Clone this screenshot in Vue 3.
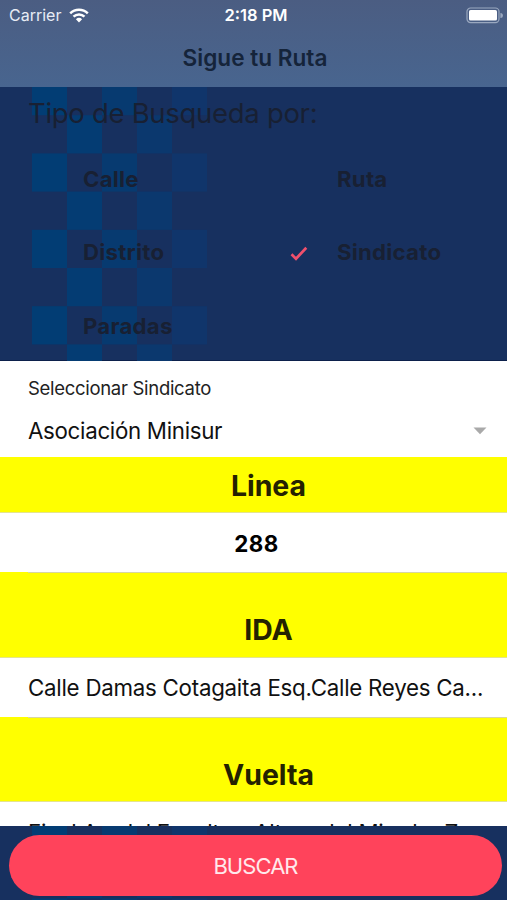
<script setup>
const options = [
  { label: 'Calle', selected: false },
  { label: 'Ruta', selected: false },
  { label: 'Distrito', selected: false },
  { label: 'Sindicato', selected: true },
  { label: 'Paradas', selected: false }
]

const columns = [
  { x: 32, fill: '#023d74', odd: false },
  { x: 67, fill: '#043c73', odd: true },
  { x: 102, fill: '#073a70', odd: false },
  { x: 137, fill: '#0b386e', odd: true },
  { x: 172, fill: '#10356b', odd: false }
]

function checker(top, rows) {
  const cells = []
  for (let row = 0; row < rows; row++) {
    for (const column of columns) {
      if (column.odd === (row % 2 === 1)) {
        cells.push({ x: column.x, y: top + row * 38.2, fill: column.fill })
      }
    }
  }
  return cells
}

const searchCells = checker(-10, 8)
const footerCells = checker(-4, 3)
</script>

<template>
  <div class="screen">
    <header class="header">
      <div class="status">
        <div class="carrier">
          <span class="carrier-name">Carrier</span>
          <svg class="wifi" viewBox="0 0 20 15" width="20" height="15">
            <g fill="none" stroke="#fff" stroke-width="2.5">
              <path d="M1.2 5.3a12.6 12.6 0 0 1 17.6 0" />
              <path d="M4.5 8.7a7.9 7.9 0 0 1 11 0" />
            </g>
            <path d="M10 14.4 6.9 11.2a4.5 4.5 0 0 1 6.2 0z" fill="#fff" />
          </svg>
        </div>
        <span class="time">2:18 PM</span>
        <svg class="battery" viewBox="0 0 37 17" width="37" height="17">
          <rect x="1" y="1" width="32" height="14.6" rx="3.6" fill="none" stroke="#9aa8bf" stroke-width="1.2" />
          <rect x="3" y="3" width="28" height="10.6" rx="1.6" fill="#fff" />
          <path d="M34.4 6a2.5 2.5 0 0 1 0 5z" fill="#9aa8bf" />
        </svg>
      </div>
      <h1 class="title"><span>Sigue tu Ruta</span></h1>
    </header>

    <section class="search">
      <svg class="checker" width="507" height="274">
        <rect v-for="(c, i) in searchCells" :key="i" :x="c.x" :y="c.y" width="35" height="38.2" :fill="c.fill" />
      </svg>
      <h2 class="question">Tipo de Busqueda por:</h2>
      <div class="options">
        <div v-for="o in options" :key="o.label" class="option">
          <span class="mark">
            <svg v-if="o.selected" viewBox="0 0 18 15" width="18" height="15">
              <path d="M1.5 8.3 6 12.7 16.3 1.8" fill="none" stroke="#f0506c" stroke-width="2.7" />
            </svg>
          </span>
          <span class="option-label">{{ o.label }}</span>
        </div>
      </div>
    </section>

    <main class="results">
      <div class="select">
        <label class="select-label">Seleccionar Sindicato</label>
        <div class="select-value">
          <span class="select-text">Asociación Minisur</span>
          <svg class="caret" viewBox="0 0 14 8" width="14" height="8"><path d="M.5.5h13L7 7.3z" fill="#a9a9a9" /></svg>
        </div>
      </div>
      <div class="band first"><span>Linea</span></div>
      <div class="row number"><span>288</span></div>
      <div class="band"><span>IDA</span></div>
      <div class="row"><span>Calle Damas Cotagaita Esq.Calle Reyes Ca...</span></div>
      <div class="band"><span>Vuelta</span></div>
      <div class="row cut"><span>Final Av. del Escolta - Altura del Mirador Z...</span></div>
    </main>

    <footer class="footer">
      <svg class="checker" width="507" height="74">
        <rect v-for="(c, i) in footerCells" :key="i" :x="c.x" :y="c.y" width="35" height="38.2" :fill="c.fill" />
      </svg>
      <button class="submit">BUSCAR</button>
    </footer>
  </div>
</template>

<style>
body {
  margin: 0;
}
</style>

<style scoped>
.screen {
  width: 507px;
  height: 900px;
  display: flex;
  flex-direction: column;
  overflow: hidden;
  background: #17305f;
  font-family: Inter, "Liberation Sans", sans-serif;
  white-space: nowrap;
}
.header {
  height: 87px;
  flex: none;
  background: linear-gradient(#4b5d82, #48658f);
}
.status {
  height: 30px;
  display: grid;
  grid-template-columns: 1fr auto 1fr;
  align-items: center;
  padding: 0 4px 0 9px;
  box-sizing: border-box;
  color: #fff;
}
.carrier {
  display: flex;
  align-items: center;
  gap: 8px;
}
.carrier-name {
  font-size: 16px;
  color: #e7ecf5;
}
.time {
  font-size: 16.5px;
  font-weight: 600;
}
.battery {
  justify-self: end;
}
.title {
  margin: 0;
  height: 54px;
  display: flex;
  align-items: center;
  justify-content: center;
  padding-left: 3px;
  font-size: 22.6px;
  font-weight: 600;
  color: #15243a;
}
.search {
  height: 274px;
  flex: none;
  position: relative;
  background: #17305f;
  border-bottom: 1px solid #0c204b;
  box-sizing: border-box;
  color: #182033;
}
.checker {
  position: absolute;
  left: 0;
  top: 0;
}
.question {
  position: relative;
  margin: 0;
  padding: 8px 0 0 28px;
  height: 46px;
  line-height: 36px;
  font-size: 27.5px;
  letter-spacing: -0.3px;
  font-weight: 400;
}
.options {
  position: relative;
  display: grid;
  grid-template-columns: 254px 253px;
  grid-auto-rows: 73.4px;
}
.option {
  display: flex;
  align-items: center;
  height: 75px;
}
.mark {
  width: 46px;
  padding-left: 36px;
  margin-right: 1px;
  display: flex;
  padding-top: 3px;
}
.option-label {
  font-size: 22.2px;
  font-weight: 700;
  letter-spacing: 0.25px;
}
.results {
  height: 465px;
  flex: none;
  overflow: hidden;
  background: #fff;
  color: #111;
}
.select {
  height: 96px;
  padding: 14px 20px 0 28px;
  box-sizing: border-box;
}
.select-label {
  display: block;
  font-size: 18.5px;
  letter-spacing: -0.3px;
  line-height: 26px;
  color: #222;
}
.select-value {
  display: flex;
  align-items: center;
  justify-content: space-between;
  margin-top: 14px;
  height: 30px;
  font-size: 22.3px;
  letter-spacing: -0.3px;
}
.caret {
  margin-top: 2px;
}
.band {
  height: 84.5px;
  box-sizing: border-box;
  padding-top: 32px;
  display: flex;
  justify-content: center;
  background: #ff0;
  border-bottom: 1px solid #e5e48e;
  font-size: 28.4px;
  line-height: 50px;
  font-weight: 700;
  color: #242200;
  padding-left: 30px;
}
.band.first {
  height: 56px;
  padding-top: 4px;
}
.row {
  height: 60px;
  box-sizing: border-box;
  display: flex;
  align-items: center;
  background: linear-gradient(90deg, #ff0 28px, #d8d6a0 28px) bottom / 100% 1px no-repeat;
  padding-left: 28px;
  font-size: 22.3px;
  letter-spacing: -0.25px;
}
.number {
  justify-content: center;
  font-weight: 700;
  color: #000;
  padding-left: 6px;
  letter-spacing: 0.4px;
}
.cut {
  background: none;
}
.footer {
  height: 74px;
  flex: none;
  position: relative;
  background: #17305f;
  box-sizing: border-box;
  padding: 9px 5px 4px 9px;
}
.submit {
  position: relative;
  display: block;
  width: 493px;
  height: 61px;
  border: 0;
  padding: 0;
  border-radius: 31px;
  background: #ff435b;
  color: #ffe9ec;
  font: 400 22px Inter, "Liberation Sans", sans-serif;
  letter-spacing: -0.95px;
}
</style>
